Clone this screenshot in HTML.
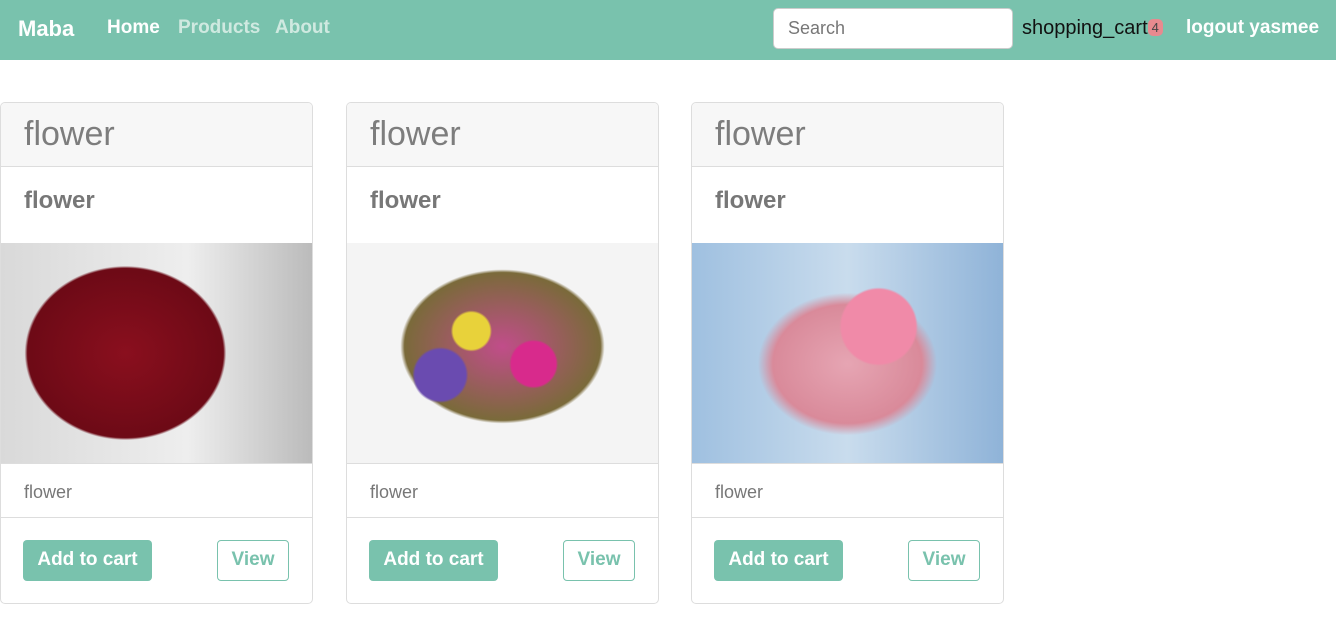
<!DOCTYPE html><html><head><style>
body{margin:0;font-family:"Liberation Sans",sans-serif;background:#fff;width:1336px;height:631px;overflow:hidden;position:relative}
.nav{position:absolute;left:0;top:0;width:1336px;height:60px;background:#79c2ad}
.nav span{position:absolute;top:17px;font-size:19px;font-weight:bold}
.search{position:absolute;left:773px;top:8px;width:240px;height:41px;background:#fff;border:1px solid #ccc;border-radius:5px;box-sizing:border-box;color:#777;font-size:18px;padding:9px 14px}
.card{position:absolute;top:102px;width:313px;height:502px;border:1px solid #ddd;border-radius:5px;box-sizing:border-box;overflow:hidden}
.hd{height:64px;background:#f7f7f7;border-bottom:1px solid #ddd;color:#7d7d7d;font-size:34px;padding:12px 0 0 23px;box-sizing:border-box}
.t{position:absolute;left:23px;top:84px;font-size:24px;color:#777;font-weight:bold}
.img{position:absolute;left:0;top:140px;width:311px;height:220px}
.ft{position:absolute;left:23px;top:379px;font-size:18px;color:#777}
.ln{position:absolute;left:0;top:360px;width:100%;border-top:1px solid #ddd}
.ln2{position:absolute;left:0;top:414px;width:100%;border-top:1px solid #ddd}
.b1{position:absolute;left:22px;top:437px;width:129px;height:41px;background:#79c2ad;border-radius:4px;color:#fff;font-size:19px;text-align:center;line-height:40px;font-weight:bold}
.b2{position:absolute;left:216px;top:437px;width:72px;height:41px;border:1px solid #79c2ad;box-sizing:border-box;border-radius:4px;color:#79c2ad;font-size:19px;text-align:center;line-height:38px;font-weight:bold}
</style></head><body>
<div class="nav">
<span style="left:18px;color:#fff;font-size:22px;top:16px">Maba</span>
<span style="left:107px;color:#fff">Home</span>
<span style="left:178px;color:#cfe9e0">Products</span>
<span style="left:275px;color:#cfe9e0">About</span>
<div class="search">Search</div>
<span style="left:1022px;color:#111;font-weight:normal;font-size:20px">shopping_cart<b style="display:inline-block;background:#e88a8f;color:#444;font-size:13px;border-radius:5px;padding:1px 4px;font-weight:normal;vertical-align:2px">4</b></span>
<span style="left:1186px;color:#fff">logout yasmee</span>
</div>
<div class="card" style="left:0"><div class="hd">flower</div><div class="t">flower</div>
<div class="img" style="background:radial-gradient(ellipse 45% 55% at 40% 50%,#8a0f1e,#6d0a16 70%,transparent 72%),linear-gradient(90deg,#d9d9d9,#eee 60%,#bbb)"></div>
<div class="ln"></div><div class="ft">flower</div><div class="ln2"></div><div class="b1">Add to cart</div><div class="b2">View</div></div>
<div class="card" style="left:346px"><div class="hd">flower</div><div class="t">flower</div>
<div class="img" style="background:radial-gradient(circle at 40% 40%,#e8d23a 0 8%,transparent 9%),radial-gradient(circle at 60% 55%,#d82a8c 0 10%,transparent 11%),radial-gradient(circle at 30% 60%,#6a4bb0 0 10%,transparent 11%),radial-gradient(ellipse 45% 48% at 50% 47%,#c14d8a,#7a6a3a 70%,transparent 73%),#f4f4f4"></div>
<div class="ln"></div><div class="ft">flower</div><div class="ln2"></div><div class="b1">Add to cart</div><div class="b2">View</div></div>
<div class="card" style="left:691px"><div class="hd">flower</div><div class="t">flower</div>
<div class="img" style="background:radial-gradient(circle at 60% 38%,#f08aa8 0 16%,transparent 17%),radial-gradient(ellipse 40% 45% at 50% 55%,#e6a5b3,#d98a9a 60%,transparent 72%),linear-gradient(90deg,#9fc0e0,#c9dced 50%,#8fb3d8)"></div>
<div class="ln"></div><div class="ft">flower</div><div class="ln2"></div><div class="b1">Add to cart</div><div class="b2">View</div></div>
</body></html>
